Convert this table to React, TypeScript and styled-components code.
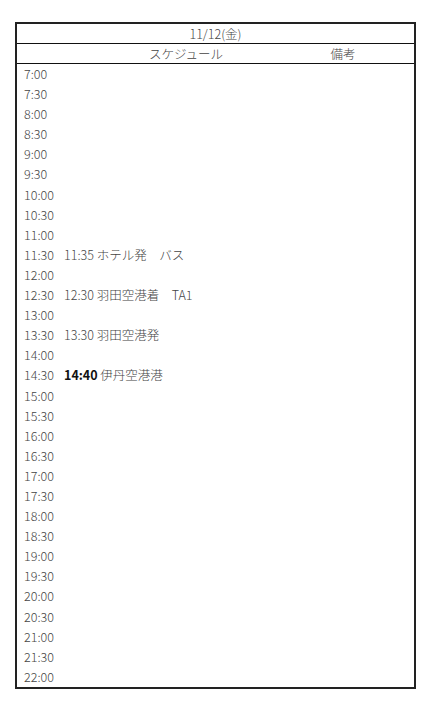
import styled, { createGlobalStyle } from 'styled-components';

const GlobalStyle = createGlobalStyle`
    body {
        margin: 0;
        background: #fff;
        font-family: "Noto Sans CJK JP", "Noto Sans", sans-serif;
        color: #444;
    }
`;

const Page = styled.div`
    padding: 22px 0 0 15px;
`;

const Sheet = styled.div`
    width: 397px;
    border: 2px solid #222;
    font-size: 12.5px;
    font-weight: 300;
`;

const DateRow = styled.div`
    height: 19px;
    line-height: 19px;
    text-align: center;
    border-bottom: 1px solid #111;
`;

const HeadRow = styled.div`
    display: grid;
    grid-template-columns: 83px 172px 1fr;
    height: 19px;
    line-height: 19px;
    border-bottom: 1px solid #111;
`;

const HeadCell = styled.div`
    text-align: center;
`;

const Body = styled.div`
    padding: 0;
`;

const Row = styled.div`
    display: flex;
    height: 20.1px;
    line-height: 19px;
`;

const Time = styled.div`
    width: 40px;
    padding-left: 7px;
    flex-shrink: 0;
`;

const Entry = styled.div<{ $bold?: boolean }>`
    white-space: pre;
    span {
        font-weight: ${(p) => (p.$bold ? 700 : 300)};
        color: ${(p) => (p.$bold ? '#111' : 'inherit')};
    }
`;

const entries: Record<string, { time: string; text: string; bold?: boolean }> = {
    '11:30': { time: '11:35', text: ' ホテル発　バス' },
    '12:30': { time: '12:30', text: ' 羽田空港着　TA1' },
    '13:30': { time: '13:30', text: ' 羽田空港発' },
    '14:30': { time: '14:40', text: ' 伊丹空港港', bold: true },
};

const slots: string[] = [];
for (let h = 7; h <= 22; h++) {
    slots.push(`${h}:00`);
    if (h < 22) slots.push(`${h}:30`);
}

function App() {
    return (
        <Page>
            <GlobalStyle />
            <Sheet>
                <DateRow>11/12(金)</DateRow>
                <HeadRow>
                    <div />
                    <HeadCell>スケジュール</HeadCell>
                    <HeadCell>備考</HeadCell>
                </HeadRow>
                <Body>
                    {slots.map((s) => {
                        const e = entries[s];
                        return (
                            <Row key={s}>
                                <Time>{s}</Time>
                                {e && (
                                    <Entry $bold={e.bold}>
                                        <span>{e.time}</span>
                                        {e.text}
                                    </Entry>
                                )}
                            </Row>
                        );
                    })}
                </Body>
            </Sheet>
        </Page>
    );
}

export default App;
